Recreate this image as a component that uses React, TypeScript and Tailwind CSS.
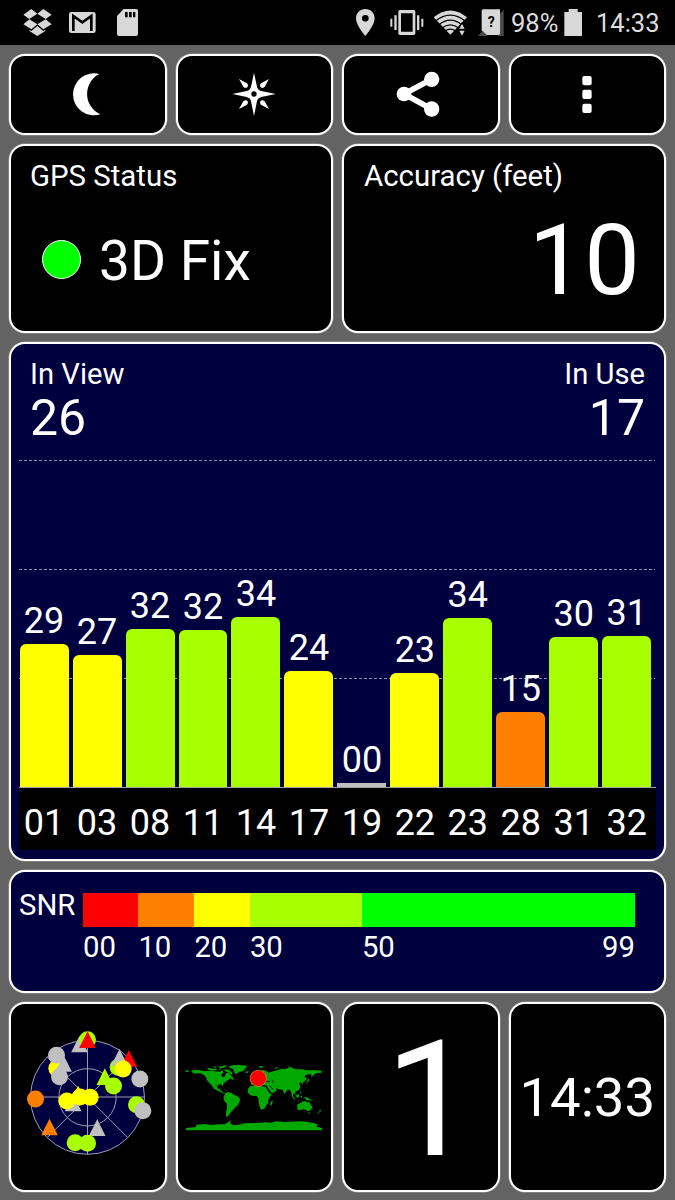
import type { ReactNode } from "react";
import clsx from "clsx";

const satellites = [
  { id: "01", snr: "29", height: 143, color: "bg-[#ffff00]" },
  { id: "03", snr: "27", height: 132, color: "bg-[#ffff00]" },
  { id: "08", snr: "32", height: 158, color: "bg-[#a8ff00]" },
  { id: "11", snr: "32", height: 157, color: "bg-[#a8ff00]" },
  { id: "14", snr: "34", height: 170, color: "bg-[#a8ff00]" },
  { id: "17", snr: "24", height: 116, color: "bg-[#ffff00]" },
  { id: "19", snr: "00", height: 4, color: "bg-[#c0c0c0]" },
  { id: "22", snr: "23", height: 114, color: "bg-[#ffff00]" },
  { id: "23", snr: "34", height: 169, color: "bg-[#a8ff00]" },
  { id: "28", snr: "15", height: 75, color: "bg-[#ff8000]" },
  { id: "31", snr: "30", height: 150, color: "bg-[#a8ff00]" },
  { id: "32", snr: "31", height: 151, color: "bg-[#a8ff00]" },
];

const LIME = "#a8ff00";
const YELLOW = "#ffff00";
const GRAY = "#c0c0c0";
const RED = "#ff0000";
const ORANGE = "#ff8000";

// drawn in order, later ones on top
const skyMarks = [
  { shape: "tri", x: 238, y: 131, color: GRAY },
  { shape: "dot", x: 262, y: 118, color: LIME },
  { shape: "tri", x: 262, y: 118, color: RED },
  { shape: "tri", x: 386, y: 174, color: RED },
  { shape: "dot", x: 354, y: 201, color: LIME },
  { shape: "tri", x: 358, y: 171, color: GRAY },
  { shape: "dot", x: 369, y: 206, color: YELLOW },
  { shape: "dot", x: 170, y: 204, color: YELLOW },
  { shape: "tri", x: 190, y: 189, color: GRAY },
  { shape: "dot", x: 169, y: 165, color: GRAY },
  { shape: "dot", x: 178, y: 229, color: GRAY },
  { shape: "dot", x: 419, y: 236, color: GRAY },
  { shape: "tri", x: 314, y: 229, color: LIME },
  { shape: "dot", x: 340, y: 257, color: LIME },
  { shape: "dot", x: 409, y: 313, color: LIME },
  { shape: "dot", x: 428, y: 331, color: GRAY },
  { shape: "dot", x: 106, y: 296, color: ORANGE },
  { shape: "tri", x: 148, y: 380, color: ORANGE },
  { shape: "tri", x: 219, y: 308, color: GRAY },
  { shape: "tri", x: 234, y: 281, color: YELLOW },
  { shape: "dot", x: 200, y: 302, color: YELLOW },
  { shape: "dot", x: 240, y: 290, color: YELLOW },
  { shape: "dot", x: 270, y: 291, color: YELLOW },
  { shape: "tri", x: 291, y: 382, color: GRAY },
  { shape: "dot", x: 225, y: 427, color: LIME },
  { shape: "dot", x: 262, y: 429, color: LIME },
];

function Panel({ className, children }: { className?: string; children: ReactNode }) {
  return (
    <div
      className={clsx(
        "rounded-[16px] border-2 border-white shadow-[0_0_0_0.5px_#a0a0a0]",
        className
      )}
    >
      {children}
    </div>
  );
}

function StatusBar() {
  return (
    <div className="flex h-[45px] bg-black pl-[22px] text-[25.5px] leading-none text-[#dcdcdc]">
      {/* Dropbox */}
      <svg width="30" height="45" viewBox="66 0 90 135" fill="#d8d8d8">
        <path d="M94 27 112 41 88 57 70 44ZM130 27 112 41 137 57 155 44ZM70 73 88 58 112 73 94 88ZM155 73 137 58 112 73 130 88ZM89 90 94 93 112 78 130 93 136 90 136 93 112 108 88 93Z" />
      </svg>
      {/* Gmail */}
      <svg className="ml-[17px]" width="27" height="45" viewBox="207 0 81 135">
        <rect x="207" y="36" width="80" height="63" rx="7" fill="#d8d8d8" />
        <path d="M220 93V48L247 67 274 48V93" fill="none" stroke="#000" strokeWidth="8" />
      </svg>
      {/* SD card */}
      <svg className="ml-[20px]" width="23" height="45" viewBox="348 0 69 135">
        <path d="M371 27H409Q414 27 414 33V102Q414 108 408 108H357Q351 108 351 102V48Z" fill="#d8d8d8" />
        <path d="M375 36h8v16h-8zM387 36h8v16h-8zM399 36h7v16h-7z" />
      </svg>

      {/* location */}
      <svg className="ml-auto" width="21" height="45" viewBox="45 0 63 135">
        <path
          fillRule="evenodd"
          fill="#d8d8d8"
          d="M76 27C60 27 48 39 48 55 48 76 76 108 76 108S104 76 104 55C104 39 92 27 76 27ZM76 45A10 10 0 1 1 76 65 10 10 0 1 1 76 45Z"
        />
      </svg>
      {/* vibrate */}
      <svg className="ml-[13px]" width="36" height="45" viewBox="147 0 108 135" fill="#d8d8d8">
        <path
          fillRule="evenodd"
          d="M180 30H221Q226 30 226 35V100Q226 105 221 105H180Q175 105 175 100V35Q175 30 180 30ZM183 40V95H218V40Z"
        />
        <path d="M163 46h7v44h-7zM151 56h6v24h-6zM231 46h7v44h-7zM244 56h6v24h-6z" />
      </svg>
      {/* wifi */}
      <svg className="ml-[8px]" width="35" height="45" viewBox="279 0 105 135">
        <path d="M281 52Q331 11 381 52L331 104Z" fill="#d8d8d8" />
        <g fill="none" stroke="#000" strokeWidth="4">
          <path d="M286 64Q331 27 376 64" />
          <path d="M296 75Q331 46 366 75" />
          <path d="M305 85Q331 64 357 85" />
          <path d="M314 94Q331 81 348 94" />
        </g>
        <path d="M366 66 380 88 366 112 352 90Z" />
        <path d="M366 72 374 86H358ZM366 107 374 92H358Z" fill="#d8d8d8" />
      </svg>
      {/* unknown sim */}
      <svg className="ml-[9px]" width="28" height="45" viewBox="411 0 84 135">
        <path d="M413 108 428 94 442 108ZM480 41 491 29V108H474Z" fill="#4c4c4c" />
        <path d="M430 28H480V99Q480 105 474 105H440L425 91V33Q425 28 430 28Z" fill="#d8d8d8" />
        <text x="454" y="81" textAnchor="middle" fontSize="42" fontWeight="700" fontFamily="Roboto, sans-serif">
          ?
        </text>
      </svg>
      <span className="mt-[11px] ml-[6px] w-[52px] whitespace-nowrap">98%</span>
      {/* battery */}
      <svg width="20" height="45" viewBox="669 0 60 135">
        <path d="M686 27H713V36H726V108H673V36H686Z" fill="#d8d8d8" />
      </svg>
      <span className="mt-[11px] ml-[13px] w-[79px] whitespace-nowrap">14:33</span>
    </div>
  );
}

function Toolbar() {
  return (
    <div className="grid grid-cols-4 gap-[9px]">
      <Panel className="flex h-[81px] justify-center bg-black pt-[8px]">
        <svg width="60" height="60" viewBox="173 192 180 180" fill="#fff">
          <path d="M297 222A63 63 0 1 0 300 343 67 67 0 0 1 297 222Z" />
        </svg>
      </Panel>
      <Panel className="flex h-[81px] justify-center bg-black pt-[8px]">
        <svg width="60" height="60" viewBox="672 192 180 180" fill="#fff">
          <path
            fillRule="evenodd"
            d="M762 218 771 260Q773 270 784 273L827 282 784 291Q773 294 771 304L762 348 753 304Q751 294 740 291L697 282 740 273Q751 270 753 260ZM762 274A8 8 0 1 0 762 290 8 8 0 1 0 762 274Z"
          />
          <path d="M807 237 794 260Q788 266 782 262 778 256 783 250ZM717 237 730 260Q736 266 742 262 746 256 741 250ZM807 327 794 304Q788 298 782 302 778 308 783 314ZM717 327 730 304Q736 298 742 302 746 308 741 314Z" />
        </svg>
      </Panel>
      <Panel className="flex h-[81px] justify-center bg-black pt-[8px]">
        <svg width="60" height="60" viewBox="152 192 180 180" fill="#fff">
          <path d="M274 238 191 282 274 327" fill="none" stroke="#fff" strokeWidth="17" />
          <circle cx="191" cy="282" r="22" />
          <circle cx="274" cy="238" r="23" />
          <circle cx="274" cy="327" r="23" />
        </svg>
      </Panel>
      <Panel className="flex h-[81px] justify-center bg-black pt-[8px]">
        <svg width="60" height="60" viewBox="652 192 180 180" fill="#fff">
          <rect x="728" y="228" width="28" height="28" rx="6" />
          <rect x="728" y="269" width="28" height="28" rx="6" />
          <rect x="728" y="311" width="28" height="28" rx="6" />
        </svg>
      </Panel>
    </div>
  );
}

function FixPanels() {
  return (
    <div className="grid grid-cols-2 gap-[9px]">
      <Panel className="h-[189px] bg-black pt-[16px] pl-[19px]">
        <div className="text-[29.4px] leading-none">GPS Status</div>
        <div className="mt-[43px] flex items-center">
          <div className="mb-[4px] ml-[12px] size-[39px] rounded-full border border-white bg-[#00ff00]" />
          <div className="ml-[18px] text-[55px] leading-none">3D Fix</div>
        </div>
      </Panel>
      <Panel className="h-[189px] bg-black pt-[16px] pr-[24px] pl-[20px]">
        <div className="text-[29.4px] leading-none">Accuracy (feet)</div>
        <div className="mt-[20px] text-right text-[99px] leading-none">10</div>
      </Panel>
    </div>
  );
}

function SatelliteChart() {
  return (
    <Panel className="h-[519px] bg-[#00003f] px-[8px]">
      <div className="flex h-[97px] justify-between px-[11px] pt-[16px] leading-none">
        <div>
          <div className="text-[29.2px] leading-none">In View</div>
          <div className="mt-[4px] text-[50px] leading-none">26</div>
        </div>
        <div className="text-right">
          <div className="text-[29.2px] leading-none">In Use</div>
          <div className="mt-[4px] text-[50px] leading-none">17</div>
        </div>
      </div>
      <div className="relative h-[346px]">
        {/* grid lines */}
        <svg className="absolute inset-0" width="637" height="346" stroke="#8c8caa" strokeDasharray="3 2">
          <path d="M0 19.5H636M0 128.5H636M0 237.5H636" />
        </svg>
        <div className="relative flex h-full items-end gap-[4px] pl-[0.6px]">
          {satellites.map((sat) => (
            <div key={sat.id} className="w-[48.98px] shrink-0 text-center">
              <div className="mb-[5px] text-[36px] leading-none">{sat.snr}</div>
              <div
                className={clsx(sat.height > 10 && "rounded-t-[6px]", sat.color)}
                style={{ height: sat.height }}
              />
            </div>
          ))}
        </div>
      </div>
      <div className="flex h-[63px] w-[637px] gap-[4px] border-t border-[#a0a0a0] bg-black pt-[17px] pl-[0.6px]">
        {satellites.map((sat) => (
          <div key={sat.id} className="w-[48.98px] shrink-0 text-center text-[36px] leading-none">
            {sat.id}
          </div>
        ))}
      </div>
    </Panel>
  );
}

function SnrLegend() {
  return (
    <Panel className="flex h-[123px] bg-[#00003f] pt-[21px] pl-[8px] text-[29.3px] leading-none">
      <div className="mt-[-2px] w-[64px]">SNR</div>
      <div className="w-[552px]">
        <div className="flex h-[34px]">
          <div className="w-[55.4px] bg-[#ff0000]" />
          <div className="w-[56px] bg-[#ff8000]" />
          <div className="w-[55.5px] bg-[#ffff00]" />
          <div className="w-[112px] bg-[#a8ff00]" />
          <div className="flex-1 bg-[#00ff00]" />
        </div>
        <div className="mt-[6px] flex">
          <span className="w-[55.4px]">00</span>
          <span className="w-[56px]">10</span>
          <span className="w-[55.5px]">20</span>
          <span className="w-[112px]">30</span>
          <span>50</span>
          <span className="ml-auto">99</span>
        </div>
      </div>
    </Panel>
  );
}

function SkyPlot() {
  return (
    <svg width="140" height="140" viewBox="53.5 80 420 420">
      <circle cx="262" cy="291" r="171" fill="#00003f" />
      <g fill="none" stroke="#9c9cb4" strokeWidth="3">
        <circle cx="262" cy="291" r="171" />
        <circle cx="262" cy="291" r="86" />
        <path d="M262 120V462M91 290H433M141 170 383 412M383 170 141 412" />
      </g>
      {skyMarks.map((mark, i) =>
        mark.shape === "dot" ? (
          <circle key={i} cx={mark.x} cy={mark.y} r="25.5" fill={mark.color} />
        ) : (
          <path key={i} d={`M${mark.x} ${mark.y - 25}l25 50h-50z`} fill={mark.color} />
        )
      )}
    </svg>
  );
}

function WorldMap() {
  return (
    <svg width="145" height="75" viewBox="36 60 435 225">
      <g fill="#00a800">
        {/* north america */}
        <path d="M64 93 72 89 88 90 104 94 120 92 134 94 150 95 157 90 161 98 154 103 157 112 165 109 168 99 177 99 183 107 190 113 181 116 175 120 166 125 160 132 158 139 153 133 143 135 141 142 145 147 151 145 150 151 157 153 159 158 166 159 162 161 150 155 139 150 132 146 125 136 119 130 112 122 108 112 101 104 90 100 79 100 66 106 76 99 66 98Z" />
        <path d="M110 87 118 83 128 86 141 86 140 91 125 92ZM128 80 140 79 137 83ZM145 80 172 75 162 83 151 85ZM163 88 176 89 188 99 184 104 176 98 165 94ZM145 86 155 86 150 90ZM183 115 190 114 190 119 184 118ZM156 146 165 149 174 152 166 151Z" />
        {/* greenland, iceland */}
        <path d="M174 81 186 76 208 75 231 77 226 86 220 93 207 96 199 103 192 97 190 88ZM225 95 236 94 234 99 227 98Z" />
        {/* south america */}
        <path d="M166 160 173 156 184 158 192 164 202 169 211 176 208 185 204 195 195 203 188 211 182 218 176 225 173 230 168 229 168 216 171 204 171 193 163 182 160 173Z" />
        {/* africa */}
        <path d="M240 139 251 137 263 136 275 139 287 141 292 149 298 160 306 161 300 170 294 180 295 188 288 197 283 206 273 209 269 200 266 187 265 175 260 168 245 167 236 161 233 154 235 145ZM304 184 309 181 306 193 302 198 300 192Z" />
        {/* eurasia */}
        <path d="M243 125 252 117 252 108 259 98 270 94 281 90 289 93 296 98 309 94 322 91 334 86 344 88 361 82 378 88 395 88 413 91 430 90 455 92V98L440 99 430 106 424 112 424 103 413 103 403 108 410 116 405 123 398 129 399 135 393 127 387 130 391 140 386 151 375 156 377 165 370 160 369 169 373 177 367 170 362 152 354 148 347 157 344 163 338 150 325 147 318 145 320 152 307 160 301 154 295 145 290 137 280 135 270 137 262 129 254 134 244 134Z" />
        <path d="M265 79 275 79 282 82 271 84ZM311 88 320 82 328 80 317 87ZM355 79 366 82 357 83ZM246 105 252 105 252 111 244 115ZM414 115 419 119 414 127 404 134 411 126ZM46 91 54 91 57 96 47 95Z" />
        {/* south-east asia, australia */}
        <path d="M362 162 371 172 378 180 372 178ZM376 167 386 161 388 169 383 174ZM391 151 394 158 391 162ZM391 168 397 167 394 175ZM376 181 389 182 388 184ZM401 172 411 172 421 178 426 184 417 181 409 180Z" />
        <path d="M381 194 391 189 400 184 409 184 412 190 416 183 421 192 427 201 423 210 414 214 403 208 393 209 383 211ZM414 217 420 217 417 221ZM449 208 454 212 448 217ZM446 216 449 218 441 223Z" />
        {/* antarctica */}
        <path d="M48 264 78 261 79 254 105 252 124 255 147 253 164 253 174 247 183 239 180 248 187 255 207 254 224 250 258 249 288 247 303 248 317 244 345 246 362 245 397 244 427 248 444 253 440 260 456 264V271H48Z" />
      </g>
      <g fill="none" stroke="#000" strokeWidth="2.5">
        <path d="M291 142 302 159M299 137 311 150M288 124 300 125M306 118 309 128" />
      </g>
      <circle cx="265" cy="115" r="24.5" fill="#ff0000" stroke="#d0a030" strokeWidth="2" />
    </svg>
  );
}

export default function App() {
  return (
    <main className="h-[1200px] w-[675px] overflow-hidden bg-[#636363] font-['Roboto',sans-serif] text-white">
      <StatusBar />
      <div className="flex flex-col gap-[9px] px-[9px] pt-[9px]">
        <Toolbar />
        <FixPanels />
        <SatelliteChart />
        <SnrLegend />
        <div className="grid grid-cols-4 gap-[9px]">
          <Panel className="flex h-[190px] items-center justify-center bg-black">
            <SkyPlot />
          </Panel>
          <Panel className="flex h-[190px] items-center justify-center bg-black">
            <WorldMap />
          </Panel>
          <Panel className="h-[190px] bg-black pt-[16px] pl-[19px] text-center text-[161px] leading-none">1</Panel>
          <Panel className="h-[190px] bg-black pt-[66px] text-center text-[54.5px] leading-none">14:33</Panel>
        </div>
      </div>
    </main>
  );
}
